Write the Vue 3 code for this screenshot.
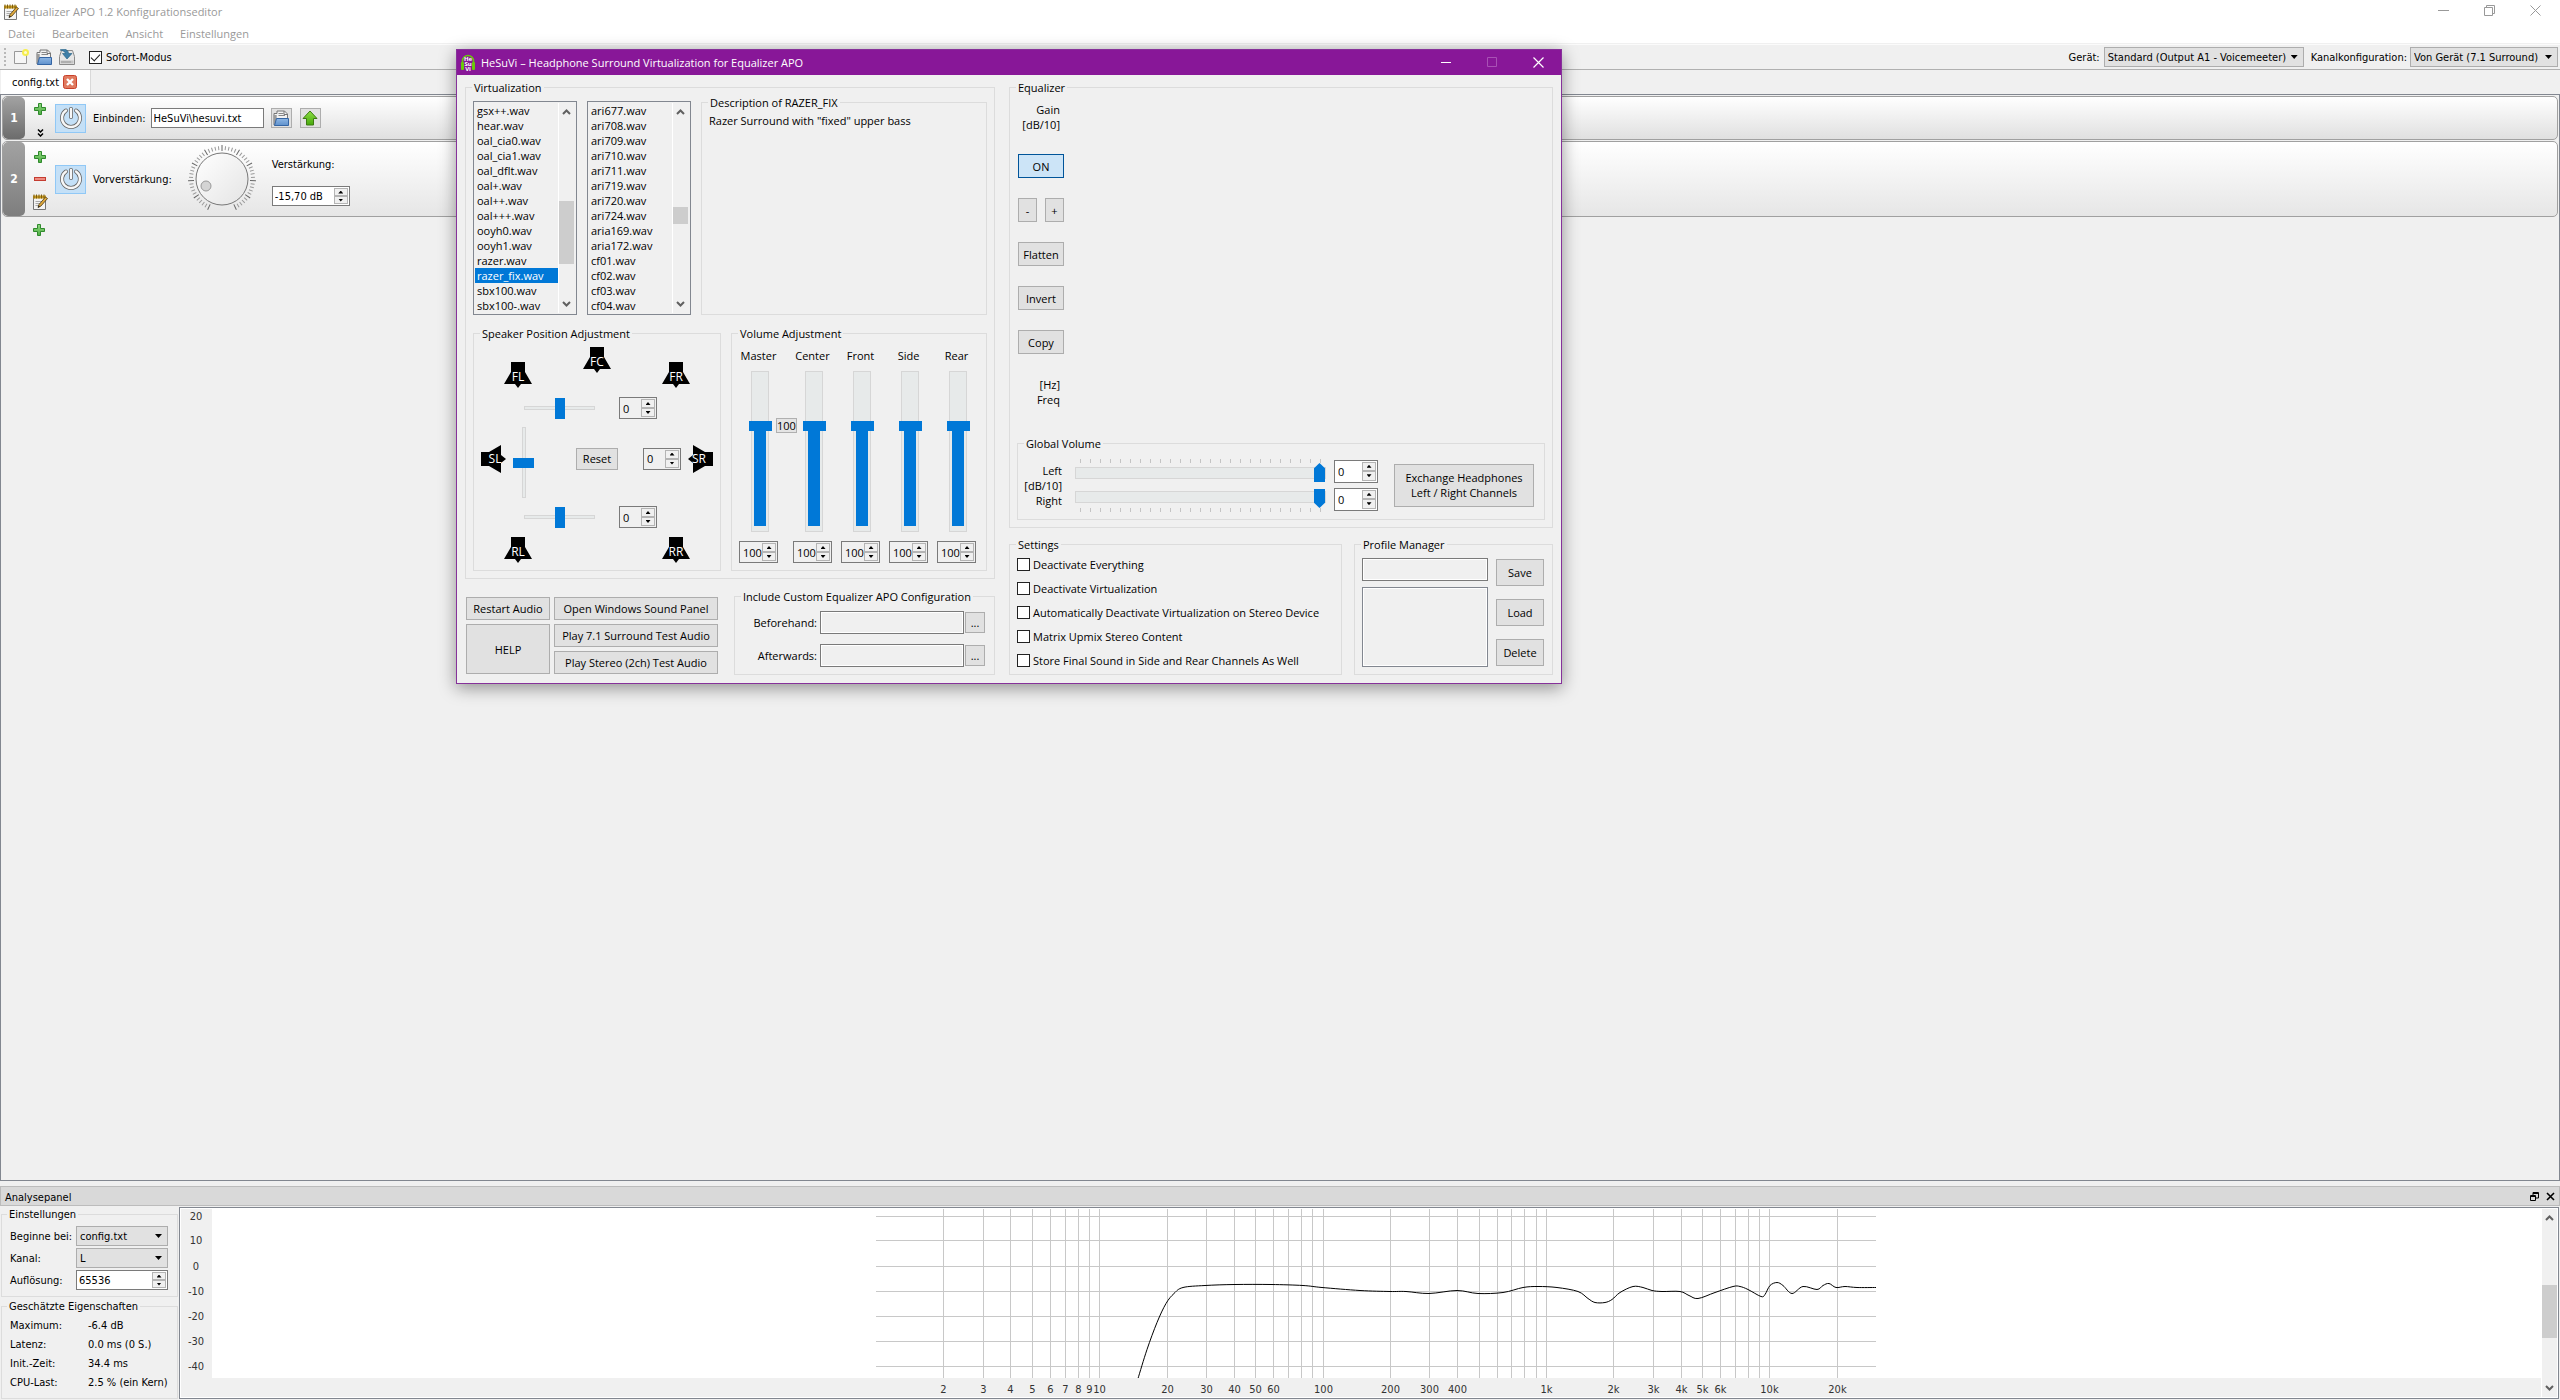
<script setup>
import { h } from 'vue'

const menus = ['Datei', 'Bearbeiten', 'Ansicht', 'Einstellungen']

const commonFiles = [
  'gsx++.wav', 'hear.wav', 'oal_cia0.wav', 'oal_cia1.wav', 'oal_dflt.wav', 'oal+.wav', 'oal++.wav',
  'oal+++.wav', 'ooyh0.wav', 'ooyh1.wav', 'razer.wav', 'razer_fix.wav', 'sbx100.wav', 'sbx100-.wav',
]
const moreFiles = [
  'ari677.wav', 'ari708.wav', 'ari709.wav', 'ari710.wav', 'ari711.wav', 'ari719.wav', 'ari720.wav',
  'ari724.wav', 'aria169.wav', 'aria172.wav', 'cf01.wav', 'cf02.wav', 'cf03.wav', 'cf04.wav',
]
const lists = [
  { name: 'Common', files: commonFiles, selected: 'razer_fix.wav', top: 98, height: 63 },
  { name: 'More', files: moreFiles, selected: '', top: 104, height: 17 },
]
const volumes = ['Master', 'Center', 'Front', 'Side', 'Rear']
const settings = [
  'Deactivate Everything',
  'Deactivate Virtualization',
  'Automatically Deactivate Virtualization on Stereo Device',
  'Matrix Upmix Stereo Content',
  'Store Final Sound in Side and Rear Channels As Well',
]
const estimates = [
  ['Maximum:', '-6.4 dB'],
  ['Latenz:', '0.0 ms (0 S.)'],
  ['Init.-Zeit:', '34.4 ms'],
  ['CPU-Last:', '2.5 % (ein Kern)'],
]

// Number box with its two step buttons
const Spin = (props) =>
  h('span', { class: 'spin' }, [
    h('input', { type: 'text', value: props.value, 'aria-label': props.label, id: props.name }),
    h('span', { class: 'steps' }, [
      h('button', { type: 'button', 'aria-label': props.label + ' +' }, h('i', { class: 'up' })),
      h('button', { type: 'button', 'aria-label': props.label + ' -' }, h('i', { class: 'down' })),
    ]),
  ])
Spin.props = ['value', 'label', 'name']

const Chevron = (props) =>
  h('svg', { class: 'chev', viewBox: '0 0 9 6', width: 9, height: 6 }, [
    h('path', {
      d: props.dir === 'up' ? 'M1 5 4.500 1.500 8 5' : 'M1 1 4.500 4.500 8 1',
      fill: 'none', stroke: '#606060', 'stroke-width': 2,
    }),
  ])
Chevron.props = ['dir']

const Speaker = (props) =>
  h('svg', { class: 'speaker', viewBox: '0 0 28 26', width: 28, height: 26, role: 'img' }, [
    h('path', {
      d: 'M7 0h14v10l7 12H17l-3 4-3-4H0L7 10z',
      transform: props.flip ? 'rotate(180 14 13)' : undefined,
    }),
    h('text', { x: 14, y: props.flip ? 16 : 19, 'text-anchor': 'middle', fill: '#fff' }, props.name),
  ])
Speaker.props = ['name', 'flip']

const ticks = Array.from({ length: 51 }, (_, i) => ({
  angle: 205 + i * 6.2,
  major: i % 5 === 0,
}))

// Frequency response plot
const plotWidth = 1000
const plotHeight = 169
const xOf = (f) => Math.round((plotWidth * Math.log10(f)) / Math.log10(30000)) + 0.5
const gridFreqs = []
for (const d of [1, 10, 100, 1000, 10000]) {
  for (let n = d === 1 ? 2 : 1; n < 10; n++) if (n * d < 30000) gridFreqs.push(n * d)
}
const freqLabels = [
  2, 3, 4, 5, 6, 7, 8, 9, 10, 20, 30, 40, 50, 60, 100, 200, 300, 400,
  1000, 2000, 3000, 4000, 5000, 6000, 10000, 20000,
].map((f) => ({ x: xOf(f), text: f >= 1000 ? f / 1000 + 'k' : String(f) }))
const levels = [[20, 7], [10, 31], [0, 57], [-10, 82], [-20, 107], [-30, 132], [-40, 157]]

const response = [
  [262, 169], [271, 140], [281, 113], [290, 94], [298, 84], [307, 78], [329, 76], [359, 75], [395, 75],
  [427, 76], [446, 78], [484, 81], [514, 82], [530, 82], [553, 84], [581, 81], [602, 84], [627, 83],
  [647, 78], [662, 77], [681, 78], [702, 82], [712, 89], [719, 93], [729, 93], [736, 90], [744, 83],
  [757, 77], [767, 78], [776, 81], [786, 82], [804, 82], [813, 86], [822, 89], [839, 83], [857, 77],
  [864, 77], [872, 80], [885, 87], [889, 85], [894, 76], [901, 73], [907, 76], [916, 84], [927, 77],
  [941, 80], [947, 76], [953, 74], [960, 78], [969, 77], [981, 78], [1000, 78],
].map(([x, y]) => [x, y + 0.5])
const curve = response.slice(1).reduce((d, p, i) => {
  const p0 = response[Math.max(i - 1, 0)]
  const p1 = response[i]
  const p3 = response[Math.min(i + 2, response.length - 1)]
  const c1 = [p1[0] + (p[0] - p0[0]) / 6, p1[1] + (p[1] - p0[1]) / 6]
  const c2 = [p[0] - (p3[0] - p1[0]) / 6, p[1] - (p3[1] - p1[1]) / 6]
  return d + `C${c1.join(' ')} ${c2.join(' ')} ${p.join(' ')}`
}, `M${response[0].join(' ')}`)
</script>

<template>
  <div class="app">
    <svg class="defs" width="0" height="0" aria-hidden="true">
      <defs>
        <linearGradient id="green" x1="0" y1="0" x2="0" y2="1">
          <stop offset="0" stop-color="#8fd67f" /><stop offset="1" stop-color="#4fae44" />
        </linearGradient>
        <linearGradient id="lime" x1="0" y1="0" x2="0" y2="1">
          <stop offset="0" stop-color="#8ee044" /><stop offset="1" stop-color="#47a80c" />
        </linearGradient>
        <linearGradient id="folder" x1="0" y1="0" x2="0" y2="1">
          <stop offset="0" stop-color="#8db6e4" /><stop offset="1" stop-color="#5f91cc" />
        </linearGradient>
        <linearGradient id="knob" x1="0" y1="0" x2="1" y2="1">
          <stop offset="0" stop-color="#fff" /><stop offset="1" stop-color="#e4e4e4" />
        </linearGradient>
        <symbol id="note" viewBox="0 0 16 16">
          <path d="M1.500 2.500h12v13h-12z" fill="#f4f4f4" stroke="#777" />
          <path d="M1 1.500h13v3H1z" fill="#c99b1e" />
          <path d="M2 .5v4M4.500 .5v4M7 .5v4M9.500 .5v4M12 .5v4" stroke="#7a5c10" />
          <path d="M3.500 7.500h8M3.500 9.500h7M3.500 11.500h5" stroke="#aaa" />
          <path d="M6 13.500 7 10.500 13.500 3l2 1.500L9 12z" fill="#e0a93c" stroke="#4a3a18" stroke-width=".8" />
          <path d="M6 13.500l.6-2 1.500 1.200z" fill="#222" />
        </symbol>
        <symbol id="plus" viewBox="0 0 12 12">
          <path d="M4.500 .5h3v4h4v3h-4v4h-3v-4h-4v-3h4z" fill="url(#green)" stroke="#2f8a2c" />
        </symbol>
        <symbol id="open" viewBox="0 0 16 16">
          <path d="M1 15V3.500h3V1h7.500l3 3V15z" fill="#f2f2f2" stroke="#777" />
          <path d="M.7 5h3v10H1z" fill="#9a9a9a" />
          <path d="M5.500 3.500h5M5.500 5.500h6.500" stroke="#888" />
          <path d="M11 1v3.500h3.500" fill="none" stroke="#777" />
          <path d="M3.500 8.500h12v7h-14z" fill="url(#folder)" stroke="#3465a4" />
        </symbol>
        <symbol id="power" viewBox="0 0 24 24">
          <g fill="none" stroke-linecap="round">
            <path d="M7 4.500a9 9 0 1 0 10 0M12 3v8" stroke="#666" stroke-width="4" />
            <path d="M7 4.500a9 9 0 1 0 10 0M12 3v8" stroke="#f7f7f7" stroke-width="2.400" />
          </g>
        </symbol>
      </defs>
    </svg>

    <header class="titlebar">
      <svg width="16" height="16"><use href="#note" /></svg>
      <span class="title">Equalizer APO 1.2 Konfigurationseditor</span>
      <div class="winctl">
        <button type="button" aria-label="Minimieren"><svg width="11" height="11"><path d="M0 5.500h11" stroke="#999" /></svg></button>
        <button type="button" aria-label="Wiederherstellen">
          <svg width="11" height="11" fill="none" stroke="#999"><path d="M.5 2.500h8v8h-8zM2.500 2.500v-2h8v8h-2" /></svg>
        </button>
        <button type="button" aria-label="Schließen"><svg width="11" height="11"><path d="M.5 .5l10 10M10.500 .5l-10 10" stroke="#999" /></svg></button>
      </div>
    </header>
    <nav class="menubar">
      <a v-for="m in menus" :key="m" href="#">{{ m }}</a>
    </nav>

    <div class="toolbar">
      <span class="grip"></span>
      <button type="button" class="tool" aria-label="Neu">
        <svg width="16" height="16">
          <path d="M1.500 2.500h12v12h-12z" fill="#f6f6f6" stroke="#999" />
          <circle cx="12.500" cy="3.500" r="3.500" fill="#f6ee4e" /><circle cx="12.500" cy="3.500" r="1.500" fill="#fffbd0" />
        </svg>
      </button>
      <button type="button" class="tool" aria-label="Öffnen"><svg width="16" height="16"><use href="#open" /></svg></button>
      <button type="button" class="tool" aria-label="Speichern">
        <svg width="16" height="16">
          <path d="M.5 7.500 2.500 1.500h11l2 6v8H.5z" fill="#e6e6e6" stroke="#8a8a8a" />
          <path d="M1.500 11.500h13v3h-13z" fill="#c4c4c4" />
          <path d="M3 12v2M5 12v2M7 12v2M9 12v2M11 12v2" stroke="#999" />
          <path d="M1 1C6-1 9.500 1 9.500 4.500H13L8 10 3.500 4.500H6.500C6.500 3 4 1.500 1 1z" fill="#3f7fa8" stroke="#1f5a80" stroke-width=".6" />
        </svg>
      </button>
      <label class="instant"><input type="checkbox" checked /> Sofort-Modus</label>
      <span class="spacer"></span>
      <label for="device">Gerät:</label>
      <span class="sel device"><select id="device"><option>Standard (Output A1 - Voicemeeter)</option></select></span>
      <label for="channels">Kanalkonfiguration:</label>
      <span class="sel channels"><select id="channels"><option>Von Gerät (7.1 Surround)</option></select></span>
    </div>

    <div class="tabs">
      <div class="tab">
        config.txt
        <button type="button" aria-label="Tab schließen">
          <svg width="14" height="14">
            <rect x=".5" y=".5" width="13" height="13" rx="2" fill="#e07a5f" stroke="#c8402a" />
            <path d="M4 4l6 6M10 4l-6 6" stroke="#fff" stroke-width="2.400" />
          </svg>
        </button>
      </div>
    </div>

    <main class="editor">
      <section class="row row-one">
        <div class="num">1</div>
        <div class="side">
          <button type="button" aria-label="Hinzufügen"><svg width="12" height="12"><use href="#plus" /></svg></button>
          <button type="button" aria-label="Mehr">
            <svg width="7" height="8" fill="none" stroke="#000" stroke-width="1.500"><path d="M1 .5l2.500 2.500L6 .5M1 4.500l2.500 2.500L6 4.500" /></svg>
          </button>
        </div>
        <button type="button" class="power" aria-label="Ein/Aus"><svg width="24" height="24"><use href="#power" /></svg></button>
        <label for="include">Einbinden:</label>
        <input id="include" class="path" type="text" value="HeSuVi\hesuvi.txt" />
        <button type="button" class="sq" aria-label="Datei öffnen"><svg width="16" height="16"><use href="#open" /></svg></button>
        <button type="button" class="sq" aria-label="Datei bearbeiten">
          <svg width="16" height="16"><path d="M8 1l7 7.500h-3.500v6.500h-7V8.500H1z" fill="url(#lime)" stroke="#3d7a12" /></svg>
        </button>
      </section>

      <section class="row row-two">
        <div class="num">2</div>
        <div class="side">
          <button type="button" aria-label="Hinzufügen"><svg width="12" height="12"><use href="#plus" /></svg></button>
          <button type="button" aria-label="Entfernen">
            <svg width="12" height="4"><rect x=".5" y=".5" width="11" height="3" fill="#ee8a80" stroke="#c43c30" /></svg>
          </button>
          <button type="button" aria-label="Bearbeiten"><svg width="16" height="16"><use href="#note" /></svg></button>
        </div>
        <button type="button" class="power" aria-label="Ein/Aus"><svg width="24" height="24"><use href="#power" /></svg></button>
        <span>Vorverstärkung:</span>
        <svg class="knob" width="70" height="70" viewBox="-35 -35 70 70">
          <path
            v-for="t in ticks" :key="t.angle" :d="t.major ? 'M0 -28V-34' : 'M0 -29V-33'"
            :transform="`rotate(${t.angle})`" :stroke="t.major ? '#666' : '#999'"
          />
          <circle r="26" fill="url(#knob)" stroke="#777" />
          <circle cx="-16" cy="7" r="5" fill="#d4d4d4" stroke="#999" />
        </svg>
        <div class="gain">
          <label for="gain">Verstärkung:</label>
          <Spin class="w78" name="gain" label="Verstärkung" value="-15,70 dB" />
        </div>
      </section>
      <button type="button" class="add" aria-label="Filter hinzufügen"><svg width="12" height="12"><use href="#plus" /></svg></button>
    </main>

    <section class="dock">
      <div class="dock-title">
        <span>Analysepanel</span>
        <button type="button" aria-label="Abdocken">
          <svg width="9" height="9" fill="none" stroke="#000"><path d="M.5 3.500h5v5h-5zM.5 4.500h5M3 3V.5h5.500V6H6M3 1.500h5.500" /></svg>
        </button>
        <button type="button" aria-label="Panel schließen">
          <svg width="9" height="9"><path d="M1 1l7 7M8 1L1 8" stroke="#000" stroke-width="1.600" /></svg>
        </button>
      </div>
      <div class="dock-body">
        <div class="dock-side">
          <fieldset class="opts">
            <legend>Einstellungen</legend>
            <label for="start">Beginne bei:</label>
            <span class="sel"><select id="start"><option>config.txt</option></select></span>
            <label for="chan">Kanal:</label>
            <span class="sel"><select id="chan"><option>L</option></select></span>
            <label for="res">Auflösung:</label>
            <Spin name="res" label="Auflösung" value="65536" />
          </fieldset>
          <fieldset class="facts">
            <legend>Geschätzte Eigenschaften</legend>
            <table>
              <tbody>
                <tr v-for="e in estimates" :key="e[0]"><th scope="row">{{ e[0] }}</th><td>{{ e[1] }}</td></tr>
              </tbody>
            </table>
          </fieldset>
        </div>
        <div class="graph">
          <svg class="levels" width="31" :height="plotHeight">
            <text v-for="l in levels" :key="l[0]" x="15" :y="l[1] + 4" text-anchor="middle">{{ l[0] }}</text>
          </svg>
          <div class="plot">
            <svg :width="plotWidth" :height="plotHeight">
              <g stroke="#c8c8c8">
                <path v-for="f in gridFreqs" :key="f" :d="`M${xOf(f)} 0V${plotHeight}`" />
                <path v-for="l in levels" :key="l[0]" :d="`M0 ${l[1] + 0.5}H${plotWidth}`" />
              </g>
              <path :d="curve" fill="none" stroke="#000" />
            </svg>
          </div>
          <div class="freqs">
            <svg :width="plotWidth" height="19">
              <text v-for="f in freqLabels" :key="f.text" :x="f.x" y="15" text-anchor="middle">{{ f.text }}</text>
            </svg>
          </div>
          <div class="scroll">
            <Chevron dir="up" />
            <span class="thumb" :style="{ top: '76px', height: '53px' }"></span>
            <Chevron dir="down" />
          </div>
        </div>
      </div>
    </section>

    <section class="dialog" role="dialog" aria-labelledby="dlg-title">
      <header class="dlg-bar">
        <svg width="14" height="18">
          <path d="M1.500 11V7a5.500 5.500 0 0 1 11 0v4" fill="none" stroke="#6ac80a" stroke-width="1.500" />
          <rect x="0" y="8" width="3" height="8" rx="1" fill="#6ac80a" /><rect x="11" y="8" width="3" height="8" rx="1" fill="#6ac80a" />
          <g fill="#fff" font-size="6" font-weight="700" text-anchor="middle">
            <text x="7" y="7">He</text><text x="7" y="12">Su</text><text x="7" y="17">Vi</text>
          </g>
        </svg>
        <span id="dlg-title" class="title">HeSuVi – Headphone Surround Virtualization for Equalizer APO</span>
        <div class="winctl">
          <button type="button" aria-label="Minimize"><svg width="11" height="11"><path d="M0 5.500h10" stroke="#fff" /></svg></button>
          <button type="button" aria-label="Maximize" disabled>
            <svg width="11" height="11"><path d="M.5 .5h9v9h-9z" fill="none" stroke="#a951b5" /></svg>
          </button>
          <button type="button" aria-label="Close"><svg width="11" height="11"><path d="M.5 .5l10 10M10.500 .5l-10 10" stroke="#fff" stroke-width="1.200" /></svg></button>
        </div>
      </header>

      <div class="dlg-body">
        <div class="left">
          <fieldset class="virt">
            <legend>Virtualization</legend>
            <div class="pick">
              <div v-for="l in lists" :key="l.name" class="list">
                <ul role="listbox" :aria-label="l.name">
                  <li v-for="f in l.files" :key="f" role="option" :class="{ on: f === l.selected }" :aria-selected="f === l.selected">{{ f }}</li>
                </ul>
                <div class="scroll">
                  <Chevron dir="up" />
                  <span class="thumb" :style="{ top: l.top + 'px', height: l.height + 'px' }"></span>
                  <Chevron dir="down" />
                </div>
              </div>
              <fieldset class="desc">
                <legend>Description of RAZER_FIX</legend>
                <p>Razer Surround with "fixed" upper bass</p>
              </fieldset>
            </div>
            <div class="adjust">
              <fieldset class="room">
                <legend>Speaker Position Adjustment</legend>
                <div class="ends top"><Speaker name="FL" /><Speaker class="fc" name="FC" /><Speaker name="FR" /></div>
                <div class="slide"><input class="hs" type="range" value="50" aria-label="Front angle" /><Spin value="0" label="Front" /></div>
                <div class="middle">
                  <svg class="speaker" width="26" height="28"><path d="M0 7h8L20 0v10l5 4-5 4v10L8 21H0z" /><text x="14" y="18" fill="#fff" text-anchor="middle">SL</text></svg>
                  <input class="vs" type="range" value="50" aria-label="Side angle" />
                  <button type="button" class="btn reset">Reset</button>
                  <Spin value="0" label="Side angle value" />
                  <svg class="speaker" width="26" height="28"><path d="M26 7h-8L6 0v10l-5 4 5 4v10l12-7h8z" /><text x="12" y="18" fill="#fff" text-anchor="middle">SR</text></svg>
                </div>
                <div class="slide"><input class="hs" type="range" value="50" aria-label="Rear angle" /><Spin value="0" label="Rear angle value" /></div>
                <div class="ends"><Speaker name="RL" flip /><Speaker name="RR" flip /></div>
              </fieldset>
              <fieldset class="vol">
                <legend>Volume Adjustment</legend>
                <div v-for="v in volumes" :key="v" class="fader">
                  <label :for="'vol-' + v">{{ v }}</label>
                  <input :id="'vol-' + v" class="vf" type="range" value="67" />
                  <Spin value="100" :label="v" />
                  <output v-if="v === 'Master'" class="tip">100</output>
                </div>
              </fieldset>
            </div>
          </fieldset>

          <div class="lower">
            <div class="actions">
              <button type="button" class="btn">Restart Audio</button>
              <button type="button" class="btn">Open Windows Sound Panel</button>
              <button type="button" class="btn help">HELP</button>
              <button type="button" class="btn">Play 7.1 Surround Test Audio</button>
              <button type="button" class="btn">Play Stereo (2ch) Test Audio</button>
            </div>
            <fieldset class="incl">
              <legend>Include Custom Equalizer APO Configuration</legend>
              <div class="file"><label for="before">Beforehand:</label><input id="before" class="box" type="text" /><button type="button" class="btn">...</button></div>
              <div class="file"><label for="after">Afterwards:</label><input id="after" class="box" type="text" /><button type="button" class="btn">...</button></div>
            </fieldset>
          </div>
        </div>

        <div class="right">
          <fieldset class="eq">
            <legend>Equalizer</legend>
            <div class="eq-side">
              <p>Gain<br />[dB/10]</p>
              <button type="button" class="btn lit">ON</button>
              <div class="pair"><button type="button" class="btn">-</button><button type="button" class="btn">+</button></div>
              <button type="button" class="btn">Flatten</button>
              <button type="button" class="btn">Invert</button>
              <button type="button" class="btn">Copy</button>
              <p>[Hz]<br />Freq</p>
            </div>
            <fieldset class="global">
              <legend>Global Volume</legend>
              <p>Left<br />[dB/10]<br />Right</p>
              <div class="tracks">
                <span class="marks"></span>
                <input class="gs up" type="range" value="100" aria-label="Left" />
                <input class="gs dn" type="range" value="100" aria-label="Right" />
                <span class="marks"></span>
              </div>
              <div class="pairv"><Spin value="0" label="Left dB/10" /><Spin value="0" label="Right dB/10" /></div>
              <button type="button" class="btn swap">Exchange Headphones<br />Left / Right Channels</button>
            </fieldset>
          </fieldset>
          <div class="bottom">
            <fieldset class="sett">
              <legend>Settings</legend>
              <label v-for="s in settings" :key="s"><input type="checkbox" />{{ s }}</label>
            </fieldset>
            <fieldset class="prof">
              <legend>Profile Manager</legend>
              <div class="names">
                <input class="box" type="text" aria-label="Profile name" />
                <div class="box profiles" role="listbox" aria-label="Profiles"></div>
              </div>
              <div class="cmds">
                <button type="button" class="btn">Save</button>
                <button type="button" class="btn">Load</button>
                <button type="button" class="btn">Delete</button>
              </div>
            </fieldset>
          </div>
        </div>
      </div>
    </section>
  </div>
</template>

<style>
body { background: #f0f0f0; }
</style>

<style scoped>
.app, .app :deep(*) { box-sizing: border-box; }
.app {
  --shell: "DejaVu Sans Condensed", "DejaVu Sans", sans-serif;
  --ui: "Open Sans", "Noto Sans", sans-serif;
  position: relative;
  display: flex;
  flex-direction: column;
  min-height: 100vh;
  background: #f0f0f0;
  color: #000;
  font: 11px/15px var(--shell);
  white-space: nowrap;
}
.defs { position: absolute; }
svg { display: block; flex: none; }
button { margin: 0; padding: 0; border: 0; background: none; color: inherit; font: inherit; }
input, select { margin: 0; padding: 0; border-radius: 0; color: inherit; font: inherit; outline: 0; }
p { margin: 0; }

.titlebar { display: flex; align-items: center; height: 24px; padding-left: 3px; gap: 4px; background: #fff; color: #999; font: 11px/16px var(--ui); }
.title { flex: 1; }
.winctl { display: flex; }
.winctl button { display: flex; align-items: center; justify-content: center; width: 46px; height: 20px; }
.titlebar .winctl { align-self: flex-start; margin-right: 2px; }
.menubar { display: flex; gap: 17px; height: 20px; padding: 2px 8px 0; background: #fff; font: 11px/16px var(--ui); border-bottom: 1px solid #f0f0f0; }
.menubar a { color: #999; text-decoration: none; }

.toolbar { display: flex; align-items: center; height: 26px; padding: 0 2px 0 4px; border-top: 1px solid #fbfbfb; border-bottom: 1px solid #b0b0b0; }
.grip { width: 2px; height: 18px; margin-right: 7px; background: repeating-linear-gradient(#b8b8b8 0 2px, transparent 2px 4px); }
.tool { margin-right: 7px; }
.instant { display: flex; align-items: center; gap: 4px; margin-left: 7px; }
.spacer { flex: 1; }
input[type="checkbox"] { appearance: none; flex: none; position: relative; width: 13px; height: 13px; border: 1px solid #222; background: #fff; }
input[type="checkbox"]:checked::after { content: ""; position: absolute; left: 1px; top: 2px; width: 8px; height: 4px; border: solid #222; border-width: 0 0 1px 1px; transform: rotate(-47deg); }
.sel { position: relative; display: block; height: 20px; }
.sel select { display: block; appearance: none; width: 100%; height: 100%; padding: 0 3px; border: 1px solid #adadad; background: #e1e1e1; }
.sel::after { content: ""; position: absolute; right: 6px; top: 8px; width: 7px; height: 4px; background: #000; clip-path: polygon(0 0, 100% 0, 50% 100%); pointer-events: none; }
.device { width: 200px; margin: 0 7px 0 4px; }
.channels { width: 148px; margin-left: 3px; }

.tabs { display: flex; height: 24px; padding-left: 1px; }
.tab { display: flex; align-items: center; gap: 4px; width: 90px; padding-left: 11px; background: #fff; border-right: 1px solid #d9d9d9; }

.editor { flex: 1; min-height: 600px; padding: 1px; border: 1px solid #828790; }
.row { display: flex; align-items: center; margin-bottom: 1px; border: 1px solid #a0a0a0; border-radius: 5px; background: linear-gradient(#fff, #e0e0e0); }
.row-one { height: 44px; }
.row-two { height: 76px; background: linear-gradient(#fff, #e6e6e6); }
.num { display: flex; align-items: center; justify-content: center; align-self: stretch; width: 22px; border-radius: 5px; background: linear-gradient(#a2a2a2, #6c6c6c); color: #fff; font-size: 12px; font-weight: 700; }
.row-two .num { background: linear-gradient(#a2a2a2, #7e7e7e); }
.side { display: flex; flex-direction: column; align-items: center; justify-content: space-between; align-self: stretch; width: 16px; margin: 6px 7px 2px 7px; }
.row-two .side { margin: 9px 7px 6px 7px; }
.power { display: flex; align-items: center; justify-content: center; width: 31px; height: 29px; margin-right: 7px; border: 1px solid #90c8f6; background: #c4e0f7; }
.path { width: 113px; height: 20px; margin: 0 7px 0 5px; padding: 0 2px; border: 1px solid #7a7a7a; background: #fff; }
.sq { display: flex; align-items: center; justify-content: center; width: 21px; height: 20px; margin-right: 8px; border: 1px solid #adadad; background: #e1e1e1; }
.knob { margin: 0 15px; }
.gain { display: flex; flex-direction: column; gap: 14px; padding-top: 5px; }
.add { display: block; margin: 7px 0 0 31px; }

.spin { display: flex; height: 20px; padding: 1px; border: 1px solid #7a7a7a; background: #fff; }
.w78 { width: 78px; }
.spin :deep(input) { flex: 1; min-width: 0; width: 0; margin: 0; padding: 0 0 0 1px; border: 0; background: none; color: inherit; font: inherit; outline: 0; }
.spin :deep(.steps) { display: flex; flex-direction: column; width: 14px; }
.spin :deep(button) { display: flex; align-items: center; justify-content: center; flex: 1; margin: 0; padding: 0; border: 1px solid #b4b4b4; background: #f0f0f0; }
.spin :deep(i) { width: 5px; height: 3px; background: #000; }
.spin :deep(.up) { clip-path: polygon(50% 0, 100% 100%, 0 100%); }
.spin :deep(.down) { clip-path: polygon(0 0, 100% 0, 50% 100%); }

fieldset { min-width: 0; margin: 0; padding: 0; border: 1px solid #dcdcdc; }
legend { height: 15px; margin-left: -1px; padding: 0 2px; line-height: 15px; }

.dock-title { display: flex; align-items: center; gap: 7px; height: 20px; margin-top: 5px; padding: 2px 4px 0; border: 1px solid #bcbcbc; background: #d9d9d9; }
.dock-title span { flex: 1; }
.dock-title button { margin-bottom: 2px; }
.dock-body { display: flex; height: 194px; padding: 1px; }
.dock-side { display: flex; flex-direction: column; gap: 2px; width: 177px; margin-right: 1px; }
.dock-side legend { margin-left: -3px; }
.opts { display: grid; grid-template-columns: 66px 92px; gap: 2px 0; align-items: center; height: 90px; padding: 4px 8px; }
.opts .spin { width: 92px; }
.facts { flex: 1; padding: 2px 8px 0; }
.facts table { border-collapse: collapse; }
.facts th, .facts td { height: 19px; padding: 0; text-align: left; font-weight: 400; }
.facts th { width: 78px; }
.graph { display: grid; grid-template: 169px 19px / 31px 1fr 16px; flex: 1; padding: 1px; border: 1px solid #828790; background: #fff; color: #333; }
.levels, .freqs { background: #f0f0f0; }
.graph text { font: 11px var(--shell); fill: #333; }
.plot, .freqs { display: flex; justify-content: center; overflow: hidden; padding-right: 2px; }
.freqs { grid-row: 2; grid-column: 1 / 3; padding-left: 31px; }
.freqs svg { overflow: visible; }
.graph .scroll { grid-row: 1 / 3; grid-column: 3; width: 15px; margin-left: 1px; }
.scroll { position: relative; display: flex; flex-direction: column; align-items: center; justify-content: space-between; padding: 6px 0; background: #f0f0f0; }
.thumb { position: absolute; left: 0; right: 0; background: #cdcdcd; }

.dialog { position: absolute; left: 456px; top: 49px; width: 1106px; border: 1px solid #86329a; background: #f0f0f0; box-shadow: 0 4px 16px rgba(0, 0, 0, 0.4); font: 11px/15px var(--ui); }
.dlg-bar { display: flex; align-items: center; gap: 6px; height: 25px; padding-left: 4px; background: #881798; color: #fff; }
.dlg-body { display: flex; gap: 14px; padding: 5px 8px 8px; }
.left { width: 530px; }
.right { flex: 1; min-width: 0; }
.virt { padding: 0 7px 7px; }
.pick { display: flex; gap: 10px; height: 220px; margin-bottom: 11px; }
.list { display: flex; width: 104px; margin-top: 6px; padding: 1px; border: 1px solid #828790; }
.list ul { flex: 1; margin: 0; padding: 0; list-style: none; }
.list li { height: 15px; padding-left: 2px; }
.list .on { background: #0078d7; color: #fff; }
.list .scroll { width: 16px; margin-right: 1px; border-left: 1px solid #fff; }
.desc { flex: 1; padding: 3px 7px; }
.adjust { display: flex; gap: 10px; height: 245px; }
.room { width: 248px; padding-top: 6px; }
.room legend, .global legend { margin-left: 6px; }
.ends { display: flex; justify-content: space-between; align-items: flex-end; padding: 0 30px; }
.ends.top { height: 41px; }
.fc { align-self: flex-start; }
.speaker { overflow: visible; font-size: 12px; }
.slide { display: flex; align-items: center; gap: 24px; margin: 9px 0 8px; padding-left: 50px; }
.middle + .slide { margin: 8px 0 9px; }
.dialog .spin { height: 22px; width: 38px; background: #f0f0f0; border-color: #7a7a7a; }
.dialog .spin :deep(input) { padding-left: 2px; }
.middle { display: flex; align-items: center; height: 71px; padding-left: 7px; }
.middle > * { margin-bottom: 8px; }
.middle .vs { margin: 0 42px 0 6px; }
.middle .reset { width: 42px; height: 22px; margin-right: 25px; }
.middle .spin { margin-right: 6px; }

input[type="range"] { appearance: none; display: block; background: none; }
.hs { width: 71px; height: 21px; }
.hs::-webkit-slider-runnable-track { height: 4px; border: 1px solid #d6d6d6; background: #e7eaea; }
.hs::-webkit-slider-thumb { appearance: none; width: 10px; height: 21px; margin-top: -9px; background: #0078d7; }
.vs { writing-mode: vertical-lr; direction: rtl; width: 21px; height: 71px; }
.vs::-webkit-slider-runnable-track { width: 4px; border: 1px solid #d6d6d6; background: #e7eaea; }
.vs::-webkit-slider-thumb { appearance: none; width: 21px; height: 10px; margin-left: -10px; background: #0078d7; }
.vf { writing-mode: vertical-lr; direction: rtl; width: 23px; height: 161px; }
.vf::-webkit-slider-runnable-track { width: 18px; border: 1px solid #d6d6d6; background: linear-gradient(#0078d7, #0078d7) center bottom 5px / 12px 96px no-repeat #e7eaea; }
.vf::-webkit-slider-thumb { appearance: none; width: 23px; height: 10px; margin-left: -3px; background: #0078d7; }
.gs { width: 251px; height: 19px; }
.gs::-webkit-slider-runnable-track { height: 12px; border: 1px solid #d6d6d6; background: #e7eaea; }
.gs::-webkit-slider-thumb { appearance: none; width: 11px; height: 19px; background: #0078d7; }
.up::-webkit-slider-thumb { margin-top: -5px; clip-path: polygon(50% 0, 100% 28%, 100% 100%, 0 100%, 0 28%); }
.dn::-webkit-slider-thumb { margin-top: -3px; clip-path: polygon(0 0, 100% 0, 100% 72%, 50% 100%, 0 72%); }

.vol { display: flex; gap: 9px; flex: 1; padding: 7px 7px 0; }
.fader { position: relative; display: flex; flex-direction: column; align-items: center; width: 39px; }
.fader:first-of-type { margin-right: 6px; }
.fader label { height: 16px; margin-bottom: 7px; }
.vf { margin-left: 2px; }
.dialog .fader .spin { width: 39px; margin-top: 9px; }
.tip { position: absolute; left: 37px; top: 70px; height: 15px; border: 1px solid #b0b0b0; background: #e4e4e4; line-height: 13px; }

.btn { display: flex; align-items: center; justify-content: center; border: 1px solid #adadad; background: #e1e1e1; }
.lower { display: flex; gap: 16px; margin-top: 10px; padding-left: 1px; }
.actions { display: grid; grid-template: repeat(3, 23px) / 84px 164px; gap: 4px; margin-top: 8px; }
.help { grid-row: 2 / 4; grid-column: 1; }
.incl { flex: 1; height: 86px; padding: 7px 9px 0 7px; }
.file { display: flex; align-items: center; justify-content: flex-end; height: 23px; margin-bottom: 10px; }
.box { border: 1px solid #7a7a7a; background: #f0f0f0; box-shadow: inset 0 0 0 1px #fff; }
.file .box { width: 144px; height: 23px; margin: 0 1px 0 3px; }
.file .btn { width: 20px; height: 21px; }

.eq { height: 448px; padding: 7px; }
.eq-side { display: flex; flex-direction: column; gap: 20px; width: 46px; margin-left: 1px; }
.eq-side p { padding-right: 4px; text-align: right; }
.eq-side p:first-child { margin-bottom: 2px; }
.eq-side p:last-child { margin-top: 3px; }
.eq-side .btn { height: 24px; }
.eq-side .lit { border-color: #005499; background: #cce4f7; }
.pair { display: flex; justify-content: space-between; }
.pair .btn { width: 19px; }
.global { display: flex; align-items: center; height: 84px; margin-top: 29px; }
.global p { width: 44px; text-align: right; }
.tracks { display: flex; flex-direction: column; gap: 1px; margin: 0 8px 0 13px; }
.gs.dn { margin-top: 4px; }
.marks { width: 241px; height: 4px; margin-left: 5px; background: repeating-linear-gradient(90deg, #c4c4c4 0 1px, transparent 1px 10px); }
.pairv { display: flex; flex-direction: column; gap: 5px; }
.dialog .pairv .spin { width: 44px; height: 23px; background: #fff; }
.swap { width: 140px; height: 43px; margin-left: 16px; }
.bottom { display: flex; gap: 12px; height: 138px; margin-top: 9px; }
.sett { flex: 1; padding-left: 7px; }
.sett label { display: flex; align-items: center; gap: 3px; height: 24px; }
.prof { display: flex; justify-content: space-between; width: 199px; padding: 6px 8px 0 7px; }
.names { display: flex; flex-direction: column; gap: 6px; width: 126px; }
.names input { height: 23px; }
.profiles { height: 80px; border-color: #828790; }
.cmds { display: flex; flex-direction: column; gap: 13px; width: 48px; padding-top: 1px; }
.cmds .btn { height: 27px; }
</style>
